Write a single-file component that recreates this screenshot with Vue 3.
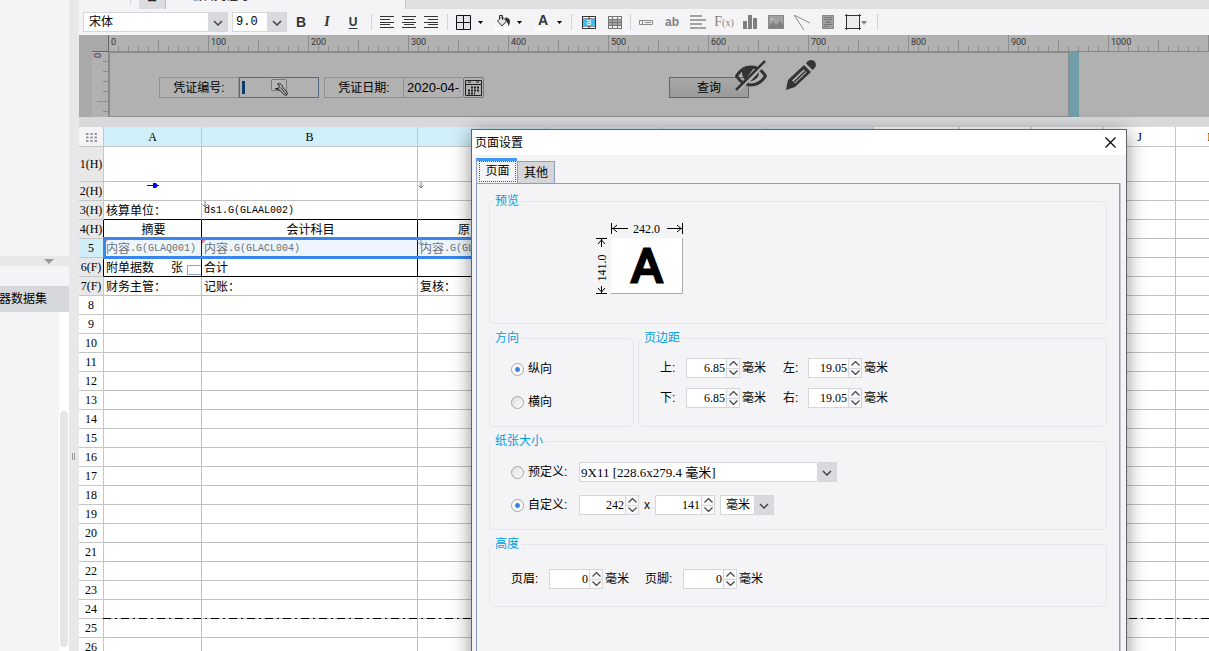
<script setup>
import { ref } from 'vue'

const fontName = ref('宋体')
const fontSize = ref('9.0')
const orientation = ref('portrait')
const paperMode = ref('custom')
const paper = ref('9X11 [228.6x279.4 毫米]')
const unit = ref('毫米')
const code = ref('')
const date = ref('2020-04-22')

const ticks = Array.from({ length: 112 }, (_, i) => ({
  x: i * 10 - 1,
  y: i % 10 === 0 ? 0 : i % 5 === 0 ? 5 : 11
}))
const rulerLabels = Array.from({ length: 11 }, (_, i) => i * 100)
const sideTicks = [9, 19, 29, 39, 49, 59]

const columns = [
  { name: 'A', width: 98 },
  { name: 'B', width: 216 },
  { name: 'C', width: 127 },
  { name: 'D', width: 119 },
  { name: 'E', width: 104 },
  { name: 'F', width: 105 },
  { name: 'G', width: 87 },
  { name: 'H', width: 72 },
  { name: 'I', width: 72 },
  { name: 'J', width: 72 },
  { name: 'K', width: 72 }
]

const content = {
  '3A': { text: '核算单位：' },
  '3B': { code: 'ds1.G(GLAAL002)', mark: 'down' },
  '2A': { mark: 'right' },
  '2C': { mark: 'down' },
  '4A': { text: '摘要', center: true },
  '4B': { text: '会计科目', center: true },
  '4C': { text: '原币金额', center: true },
  '5A': { text: '内容', code: '.G(GLAQ001)', mark: 'red' },
  '5B': { text: '内容', code: '.G(GLACL004)', mark: 'red' },
  '5C': { text: '内容', code: '.G(GLAQ002)', mark: 'down' },
  '6A': { text: '附单据数', extra: '张' },
  '6B': { text: '合计' },
  '7A': { text: '财务主管：' },
  '7B': { text: '记账：' },
  '7C': { text: '复核：' }
}
const suffix = { 1: '(H)', 2: '(H)', 3: '(H)', 4: '(H)', 6: '(F)', 7: '(F)' }
const rows = Array.from({ length: 26 }, (_, i) => {
  const n = i + 1
  return {
    n,
    label: n + (suffix[n] || ''),
    cells: columns.map((c, j) => ({
      key: n + c.name,
      boxed: j < 6 && n >= 4 && n <= 6,
      above: j < 6 && n === 3,
      ...(content[n + c.name] || {})
    }))
  }
})

const margins = ref([
  [{ label: '上:', value: '6.85' }, { label: '左:', value: '19.05' }],
  [{ label: '下:', value: '6.85' }, { label: '右:', value: '19.05' }]
])
const custom = ref(['242', '141'])
const heights = ref([{ label: '页眉:', value: '0' }, { label: '页脚:', value: '0' }])
</script>

<template>
  <div class="app">
    <aside class="side">
      <div class="side-top"></div>
      <div class="side-split"><svg width="10" height="6"><path d="M0 1h10L5 6z" fill="#999" /></svg></div>
      <div class="side-gap"></div>
      <div class="side-item"><span>服务器数据集</span></div>
      <div class="side-body"><div class="track"><div class="thumb"></div></div></div>
    </aside>
    <div class="splitter"><i></i><i></i></div>

    <main class="main">
      <div class="strip">
        <div class="strip-tabs">
          <span class="strip-sep"></span>
          <span class="strip-btn">⊞</span>
          <span class="strip-name"><b>HE</b> 编辑凭证号且</span>
        </div>
      </div>

      <div class="toolbar">
        <span class="sel font-sel">
          <select v-model="fontName" aria-label="字体"><option>宋体</option></select>
          <svg width="10" height="6"><path d="M1 1l4 4 4-4" /></svg>
        </span>
        <span class="sel size-sel">
          <select v-model="fontSize" aria-label="字号"><option>9.0</option></select>
          <svg width="10" height="6"><path d="M1 1l4 4 4-4" /></svg>
        </span>
        <button class="t26 bold">B</button>
        <button class="t26 ital">I</button>
        <button class="t26 under">U</button>
        <i class="sep"></i>
        <button class="t22" aria-label="左对齐"><svg width="14" height="12" class="ln"><path d="M0 .5h14M0 3.500h10M0 6.500h14M0 8.500h10M0 11.500h14" /></svg></button>
        <button class="t22" aria-label="居中"><svg width="14" height="12" class="ln"><path d="M0 .5h14M2 3.500h10M0 6.500h14M2 8.500h10M0 11.500h14" /></svg></button>
        <button class="t22" aria-label="右对齐"><svg width="14" height="12" class="ln"><path d="M0 .5h14M4 3.500h10M0 6.500h14M4 8.500h10M0 11.500h14" /></svg></button>
        <i class="sep"></i>
        <button class="t22" aria-label="边框"><svg width="15" height="15"><path d="M.5.5h14v14H.5zM7.500 0v15M0 7.500h15" fill="#e4e5e9" stroke="#111" /></svg></button>
        <button class="t12" aria-label="边框选项"><svg width="5" height="3"><path d="M0 0h5L2.500 3z" fill="#000" /></svg></button>
        <button class="t26 shifted" aria-label="背景色">
          <svg width="16" height="17">
            <rect y="13" width="16" height="4" fill="#fff" />
            <path d="M2.500 7L7 2.500l4.500 4.500L7 12z" fill="#e8e8ea" stroke="#333" />
            <path d="M4.500 5V1.500h3V6" fill="none" stroke="#333" />
            <path d="M10 3.500c3 0 5 1.500 5 4 0 1.500-.5 3-1.500 4.500-.8-3-1.500-4.500-3-6z" fill="#333" />
          </svg>
        </button>
        <button class="t14" aria-label="背景色选项"><svg width="5" height="3"><path d="M0 0h5L2.500 3z" fill="#000" /></svg></button>
        <button class="t26 shifted color" aria-label="字体颜色"><b>A</b><i></i></button>
        <button class="t14" aria-label="字体颜色选项"><svg width="5" height="3"><path d="M0 0h5L2.500 3z" fill="#000" /></svg></button>
        <i class="sep"></i>
        <button class="t26" aria-label="合并单元格">
          <svg width="14" height="13">
            <rect x=".5" y=".5" width="13" height="12" fill="#fff" stroke="#333" />
            <path d="M7 0v13M0 3h14M0 10h14" stroke="#333" />
            <rect x="1" y="3" width="12" height="7" fill="#3cbcf5" />
            <path d="M5 4.500h3.500v4H5.500v-2h3" fill="none" stroke="#d9f3ff" />
          </svg>
        </button>
        <button class="t26" aria-label="取消合并">
          <svg width="14" height="13">
            <rect x=".5" y=".5" width="13" height="12" fill="#a2a2a2" stroke="#777" />
            <path d="M1 2h12M1 11h12" stroke="#f0f0f0" stroke-width="2" />
            <path d="M0 3.500h14M0 6.500h14M0 9.500h14M4.500 0v13M9.500 0v13" stroke="#777" />
          </svg>
        </button>
        <i class="sep slim"></i>
        <button class="t26" aria-label="文本框"><svg width="14" height="5"><path d="M.5.5h13v4H.5zM3.500 1v3M6 2.500h6" fill="none" stroke="#888" /></svg></button>
        <button class="t26 ab">ab</button>
        <button class="t26" aria-label="富文本"><svg width="16" height="14"><path d="M0 1h12M0 5h16M0 9h12M0 13h16" stroke="#888" stroke-width="1.500" /></svg></button>
        <button class="t26 fx">F<small>(x)</small></button>
        <button class="t26" aria-label="图表"><svg width="14" height="14" fill="#808080"><rect y="6" width="4" height="8" /><rect x="5" width="4" height="14" /><rect x="10" y="3" width="4" height="11" /></svg></button>
        <button class="t26" aria-label="图片"><svg width="16" height="14"><rect x=".5" y=".5" width="15" height="13" fill="#a2a2a2" stroke="#888" /><path d="M1 11l4-4 3 3 4-4 3 4v3H1z" fill="#808080" /><circle cx="4" cy="4" r="1" fill="#ccc" /></svg></button>
        <button class="t26" aria-label="斜线"><svg width="16" height="15"><path d="M0 0l16 8M0 0l10 15" fill="none" stroke="#888" /></svg></button>
        <button class="t26" aria-label="子报表"><svg width="12" height="14"><rect x=".5" y=".5" width="11" height="13" fill="#a2a2a2" stroke="#888" /><path d="M2 2.500h8M2 4.500h8M2 9.500h8M2 11.500h5" stroke="#777" /><path d="M3 8l2-2 2 1 2-1v2z" fill="#777" /></svg></button>
        <button class="t34" aria-label="悬浮元素">
          <svg width="22" height="16"><rect x="1.500" y="1.500" width="13" height="13" fill="#ececee" stroke="#333" /><path d="M0 1.500h2M14 1.500h2M0 14.500h2M14 14.500h2M1.500 0v2M14.500 0v2M1.500 14v2M14.500 14v2" stroke="#333" /><path d="M16 7h6l-3 4z" fill="#888" /></svg>
        </button>
        <i class="sep slim"></i>
      </div>

      <section class="designer">
        <div class="corner"></div>
        <div class="corner-line"></div>
        <svg class="ruler-x">
          <rect v-for="t in ticks" :key="t.x" :x="t.x" :y="t.y" width="1" :height="16 - t.y" fill="#8c8c8c" />
          <text v-for="n in rulerLabels" :key="n" :x="n + 2" y="10">{{ n }}</text>
          <rect y="16" width="100%" height="1" fill="#888" />
        </svg>
        <svg class="ruler-y">
          <rect v-for="y in sideTicks" :key="y" :x="y === 49 ? 5 : 11" :y="y" :width="y === 49 ? 11 : 5" height="1" fill="#8c8c8c" />
          <text transform="translate(9 6) rotate(-90)">0</text>
          <rect x="16" width="1" height="65" fill="#888" />
        </svg>
        <div class="stage">
          <div class="canvas">
            <label class="field" for="code">凭证编号:</label>
            <span class="code-box">
              <input id="code" v-model="code" />
              <i class="cursor"></i>
              <svg width="17" height="17">
                <rect x=".5" y=".5" width="15" height="11" rx="1" fill="#b5b5b5" stroke="#777" />
                <path d="M4 9.500h3.500l1-3-2-1.500c2.500-1 5 .5 5 3l4.500 5v3h-2.500l-5-5z" fill="#b5b5b5" stroke="#222" />
                <path d="M9.500 8.500l5 6" stroke="#222" />
              </svg>
            </span>
            <label class="field second" for="date">凭证日期:</label>
            <span class="date-box"><input id="date" v-model="date" /></span>
            <button class="cal" aria-label="选择日期">
              <svg width="17" height="17"><path d="M.5 1.500h16v15H.5zM0 5.500h17" fill="none" stroke="#222" /><path d="M3 3h3M11 3h3" stroke="#222" /><path d="M6 8.500h9M3 11.500h12M3 14.500h7" stroke="#222" stroke-width="2" stroke-dasharray="2 1" /></svg>
            </button>
            <button class="query">查询</button>
            <svg class="eye" width="32" height="31" viewBox="0 0 32 31">
              <path d="M1.500 16Q7 7 16 7q9 0 14.500 9Q25 25 16 25 7 25 1.500 16z" fill="none" stroke="#333" stroke-width="3" />
              <path d="M7 8q5-3 13-1.500L10 20q-4-5-3-12z" fill="#333" />
              <path d="M24 12q0 8-9 9.500z" fill="#333" />
              <path d="M1.500 31.500L31.500 1.500" stroke="#b1b1b1" stroke-width="4" />
              <path d="M1 30L30 1" stroke="#333" stroke-width="2.500" />
            </svg>
            <svg class="pencil" width="30" height="31" viewBox="0 0 30 31">
              <path d="M0 30l2-10L18 5l7 7L9 27z" fill="#333" />
              <path d="M6 20.500L17.500 9.500l3 3L9 23.500z" fill="#b1b1b1" />
              <path d="M8 22L19 11.500" stroke="#333" stroke-width="1.500" />
              <path d="M20 3.500C22.500-1 27-.5 29 2c2 3 .5 5.500-2.500 8z" fill="#333" />
            </svg>
          </div>
          <div class="handle"></div>
        </div>
      </section>

      <div class="divider"></div>

      <section class="sheet">
        <table>
          <colgroup><col class="head-col" /><col v-for="c in columns" :key="c.name" :style="{ width: c.width + 'px' }" /></colgroup>
          <thead>
            <tr>
              <th class="all"><svg width="11" height="9"><path d="M0 1h11M0 4.500h11M0 8h11" stroke="#999" stroke-width="2" stroke-dasharray="2.500 1.750" /></svg></th>
              <th v-for="(c, i) in columns" :key="c.name" :class="{ on: i < 6 }">{{ c.name }}</th>
            </tr>
          </thead>
          <tbody>
            <tr v-for="r in rows" :key="r.n" :class="{ tall: r.n === 1, muted: r.n === 5 }">
              <th :class="{ band: r.n < 8, on: r.n === 5, edge: r.n >= 4 && r.n <= 6 }">{{ r.label }}</th>
              <td v-for="c in r.cells" :key="c.key" :class="{ boxed: c.boxed, above: c.above, center: c.center }">
                <div class="cell">
                  <span v-if="c.text">{{ c.text }}</span><span v-if="c.code" class="code">{{ c.code }}</span>
                  <template v-if="c.extra"><span class="extra">{{ c.extra }}</span><i class="mini"></i></template>
                  <svg v-if="c.mark === 'right'" class="m-right" width="12" height="7"><path d="M0 3.500h12" stroke="#00f" /><path d="M6 1h3l2 2.500L9 6H6z" fill="#00f" /></svg>
                  <svg v-if="c.mark === 'down'" class="m-down" width="6" height="7"><path d="M3 0v6M.5 3.500L3 6l2.500-2.500" fill="none" stroke="#777" /></svg>
                  <svg v-if="c.mark === 'red'" class="m-down" width="6" height="6"><path d="M0 0h5L0 5z" fill="#e8798a" /></svg>
                </div>
              </td>
            </tr>
          </tbody>
        </table>
        <div class="selection"></div>
        <div class="page-break"></div>
      </section>
    </main>

    <div class="dialog" role="dialog" aria-labelledby="dlg-title">
      <header class="title">
        <span id="dlg-title">页面设置</span>
        <button aria-label="关闭"><svg width="11" height="11"><path d="M.5.5l10 10M10.500.5l-10 10" stroke="#000" stroke-width="1.200" /></svg></button>
      </header>
      <div class="tabs">
        <button class="tab active"><span>页面</span></button>
        <button class="tab">其他</button>
      </div>
      <div class="panel">
        <fieldset class="preview">
          <legend>预览</legend>
          <svg width="90" height="76">
            <rect x="15" y="16" width="71" height="56" fill="#fff" />
            <path d="M15 71.500h71.500V16" fill="none" stroke="#aaa" />
            <g fill="none" stroke="#000">
              <path d="M15.500 1v11M86.500 1v11M16 6.500h16M86 6.500H71M21 3l-4 3.500 4 3.500M81 3l4 3.500-4 3.500" />
              <path d="M0 16.500h11M0 71.500h11M5.500 17v8M5.500 71v-7M2 22l3.500-4L9 22M2 66l3.500 4L9 66" />
            </g>
            <text x="50.500" y="11" text-anchor="middle" class="dim">242.0</text>
            <text transform="translate(10 46) rotate(-90)" text-anchor="middle" class="dim">141.0</text>
            <text x="51" y="60" text-anchor="middle" class="big">A</text>
          </svg>
        </fieldset>
        <div class="pair">
          <fieldset class="dir">
            <legend>方向</legend>
            <label class="radio"><input v-model="orientation" type="radio" value="portrait" />纵向</label>
            <label class="radio"><input v-model="orientation" type="radio" value="landscape" />横向</label>
          </fieldset>
          <fieldset class="margins">
            <legend>页边距</legend>
            <div v-for="(line, i) in margins" :key="i" class="line">
              <label v-for="m in line" :key="m.label" class="measure">
                <span class="short">{{ m.label }}</span>
                <span class="spin"><input v-model="m.value" /><span class="steps"><button aria-label="增加"><svg width="9" height="5"><path d="M.5 4.500l4-4 4 4" /></svg></button><button aria-label="减少"><svg width="9" height="5"><path d="M.5.5l4 4 4-4" /></svg></button></span></span>
                <span>毫米</span>
              </label>
            </div>
          </fieldset>
        </div>
        <fieldset class="paper">
          <legend>纸张大小</legend>
          <div class="line">
            <label class="radio"><input v-model="paperMode" type="radio" value="preset" />预定义:</label>
            <span class="sel paper-sel">
              <select v-model="paper" aria-label="纸张"><option>9X11 [228.6x279.4 毫米]</option></select>
              <svg width="10" height="6"><path d="M1 1l4 4 4-4" /></svg>
            </span>
          </div>
          <div class="line">
            <label class="radio"><input v-model="paperMode" type="radio" value="custom" />自定义:</label>
            <span class="spin wide"><input v-model="custom[0]" aria-label="宽度" /><span class="steps"><button aria-label="增加"><svg width="9" height="5"><path d="M.5 4.500l4-4 4 4" /></svg></button><button aria-label="减少"><svg width="9" height="5"><path d="M.5.5l4 4 4-4" /></svg></button></span></span>
            <span class="times">x</span>
            <span class="spin wide"><input v-model="custom[1]" aria-label="高度" /><span class="steps"><button aria-label="增加"><svg width="9" height="5"><path d="M.5 4.500l4-4 4 4" /></svg></button><button aria-label="减少"><svg width="9" height="5"><path d="M.5.5l4 4 4-4" /></svg></button></span></span>
            <span class="sel unit-sel">
              <select v-model="unit" aria-label="单位"><option>毫米</option></select>
              <svg width="10" height="6"><path d="M1 1l4 4 4-4" /></svg>
            </span>
          </div>
        </fieldset>
        <fieldset class="heights">
          <legend>高度</legend>
          <div class="line">
            <label v-for="h in heights" :key="h.label" class="measure">
              <span class="long">{{ h.label }}</span>
              <span class="spin"><input v-model="h.value" /><span class="steps"><button aria-label="增加"><svg width="9" height="5"><path d="M.5 4.500l4-4 4 4" /></svg></button><button aria-label="减少"><svg width="9" height="5"><path d="M.5.5l4 4 4-4" /></svg></button></span></span>
              <span>毫米</span>
            </label>
          </div>
        </fieldset>
      </div>
    </div>
  </div>
</template>

<style>
body { margin: 0; overflow: hidden; }
</style>

<style scoped>
* { box-sizing: border-box; }
.app {
  position: relative;
  display: flex;
  height: 100vh;
  overflow: hidden;
  background: #fff;
  color: #000;
  font: 12px/18px "Liberation Sans", "Noto Sans CJK SC", sans-serif;
}
button, input, select { margin: 0; padding: 0; border: 0; background: none; font: inherit; color: inherit; outline: none; border-radius: 0; }
button { display: flex; align-items: center; justify-content: center; }
select { appearance: none; }
i { font-style: normal; }
svg { display: block; flex: none; }

.side { flex: none; width: 69px; display: flex; flex-direction: column; background: #f4f4f7; }
.side-top { height: 256px; }
.side-split { height: 10px; background: #e8e8e8; display: flex; justify-content: flex-end; align-items: center; padding-right: 15px; }
.side-gap { height: 20px; }
.side-item { height: 26px; background: #d7d8dc; display: flex; justify-content: flex-end; align-items: center; padding-right: 22px; white-space: nowrap; overflow: hidden; }
.side-body { flex: 1; display: flex; justify-content: flex-end; }
.track { width: 10px; background: #fff; padding: 99px 1px 4px; }
.thumb { height: 100%; background: #e6e6e8; border-radius: 4px; }
.splitter { flex: none; width: 10px; background: #e8e8e8; display: flex; gap: 1px; padding: 453px 0 0 3px; }
.splitter i { width: 1px; height: 7px; background: #999; }

.main { flex: 1; min-width: 0; display: flex; flex-direction: column; overflow: hidden; }
.strip { height: 9px; flex: none; background: #e0e0e2; overflow: hidden; }
.strip-tabs { width: 327px; height: 9px; background: #f4f4f7; border-right: 1px solid #c8c8cc; display: flex; align-items: flex-end; padding-left: 51px; }
.strip-sep { width: 1px; height: 4px; background: #d5d5d9; margin-bottom: 5px; }
.strip-btn { width: 27px; height: 20px; margin: 0 4px 0 8px; background: #dcdde1; border-right: 1px solid #bbb; text-align: center; line-height: 16px; }
.strip-name { line-height: 18px; margin-bottom: 4px; white-space: nowrap; }
.strip-name b { color: #1f8fe0; }

.toolbar { flex: none; height: 26px; background: #f4f4f7; display: flex; align-items: center; padding-left: 4px; }
.toolbar button { flex: none; height: 22px; color: #333; }
.t34 { width: 34px; }
.t26 { width: 26px; }
.t22 { width: 22px; }
.t12 { width: 12px; }
.t14 { width: 14px; }
.toolbar .shifted { padding-left: 8px; }
.toolbar .t34 { justify-content: flex-start; padding-left: 4px; }
.sep { flex: none; width: 10px; height: 16px; background: linear-gradient(#d2d3d7, #d2d3d7) center / 1px 16px no-repeat; }
.slim { width: 5px; }
.bold, .under { font-weight: bold; }
.bold { font-size: 14px; }
.ital { font: italic bold 14px "Liberation Serif", serif; }
.under { text-decoration: underline; text-underline-offset: 2px; }
.ln { stroke: #333; }
.color { flex-direction: column; font-size: 14px; line-height: 14px; }
.color i { width: 16px; height: 4px; background: #fff; }
.toolbar .ab { color: #808080; font: bold 12px "Liberation Sans", sans-serif; }
.toolbar .fx { color: #808080; font: 14px "Liberation Serif", serif; }
.fx small { font-size: 10px; }

.sel { position: relative; display: flex; height: 20px; border: 1px solid #d5d6da; flex: none; background: linear-gradient(#d9dadd, #d9dadd) right / 19px 100% no-repeat #fff; }
.sel select { width: 100%; padding-left: 5px; font-size: 12px; }
.sel svg { position: absolute; right: 4px; top: 7px; pointer-events: none; fill: none; stroke: #444; stroke-width: 1.5; }
.font-sel { width: 145px; margin-right: 4px; }
.size-sel { width: 55px; margin-right: 1px; }
.size-sel select { padding-left: 3px; font-family: "Liberation Mono", monospace; }

.designer { flex: none; display: grid; grid-template-columns: 13px 17px 1fr; grid-template-rows: 17px 65px; background: #b1b1b1; }
.corner { grid-row: 1 / 3; background: #a9a9a9; }
.corner-line { border-bottom: 1px solid #666; border-right: 1px solid #666; background: #a9a9a9; }
.ruler-x { width: 100%; height: 17px; overflow: hidden; }
.ruler-y { width: 17px; height: 65px; }
.ruler-x text, .ruler-y text { font: 9px Roboto, sans-serif; fill: #333; }
.stage { display: flex; min-width: 0; }
.canvas { position: relative; flex: none; width: 960px; border: 1px solid #8c8c8c; display: flex; align-items: center; padding: 6px 0 0 49px; }
.handle { width: 10px; background: #709faa; }
.field { width: 80px; height: 21px; border: 1px solid #909090; text-align: center; line-height: 20px; flex: none; }
.second { margin-left: 5px; }
.code-box { position: relative; width: 80px; height: 21px; border: 1px solid #56688c; flex: none; }
.code-box input { width: 100%; height: 100%; }
.code-box svg { position: absolute; left: 31px; top: 1px; }
.cursor { position: absolute; left: 2px; top: 3px; width: 3px; height: 13px; background: #0b3a6b; }
.date-box { width: 59px; height: 21px; border: 1px solid #909090; border-width: 1px 0; padding-left: 3px; flex: none; overflow: hidden; display: flex; }
.date-box input { width: 53px; height: 19px; font-size: 13px; }
.cal { width: 21px; height: 21px; border: 1px solid #777; border-radius: 2px; flex: none; }
.query { width: 80px; height: 21px; margin-left: 185px; border: 1px solid #666; background: linear-gradient(#a8a8a8, #999); flex: none; }
.eye { position: absolute; left: 625px; top: 7px; }
.pencil { position: absolute; left: 676px; top: 7px; }
.divider { flex: none; height: 10px; background: #d9d9db; }

.sheet { position: relative; flex: 1; overflow: hidden; }
table { width: 1169px; table-layout: fixed; border-collapse: separate; border-spacing: 0; }
.head-col { width: 25px; }
th { height: 19px; padding: 0; font: 12px/18px "Liberation Serif", "Noto Sans CJK SC", serif; border: solid #c6c6c6; border-width: 0 1px 1px 0; white-space: nowrap; }
thead th { height: 20px; line-height: 17px; padding-top: 2px; }
.all { background: #f4f4f7; }
.all svg { margin: 0 auto; }
.band { background: #e8e8e8; }
th.on { background: #cfeffb; }
.edge { border-right-color: #000; }
td { height: 19px; padding: 0; border: solid #c0c0c0; border-width: 0 1px 1px 0; }
.tall th, .tall td { height: 35px; }
.above { border-bottom-color: #000; }
.boxed { border-color: #000; }
.cell { position: relative; height: 18px; display: flex; align-items: center; padding: 2px 0 0 2px; white-space: nowrap; }
.center .cell { justify-content: center; }
.code { font: 10px/18px "Liberation Mono", monospace; }
.muted td { color: #666; }
.extra { margin-left: 17px; }
.mini { position: absolute; right: 0; bottom: 1px; width: 14px; height: 10px; border: 1px solid #8ea3cc; border-right: 0; }
.m-right { margin: -14px 0 0 41px; }
.m-down { position: absolute; left: 0; top: 0; }
.selection { position: absolute; left: 24px; top: 110px; width: 770px; height: 22px; border: 3px solid #3a86ef; background: rgba(140, 190, 240, .15); }
.page-break { position: absolute; left: 24px; right: 0; top: 491px; height: 1px; background: repeating-linear-gradient(90deg, #000 0 8px, transparent 8px 12px, #000 12px 14px, transparent 14px 18px); }

.dialog { position: absolute; left: 471px; top: 129px; bottom: -20px; width: 656px; border: 1px solid #62666c; background: #f4f4f7; box-shadow: 0 4px 18px rgba(0, 0, 0, .45); display: flex; flex-direction: column; }
.title { height: 25px; flex: none; background: #fff; display: flex; justify-content: space-between; align-items: center; padding: 0 10px 0 3px; }
.tabs { display: flex; align-items: flex-end; height: 28px; flex: none; padding: 4px 4px 0; }
.tab { width: 38px; height: 22px; border: 1px solid #8a9ebf; border-bottom: 0; background: #d5d5da; }
.tab.active { width: 41px; height: 25px; border-top: 3px solid #3f97f5; border-right: 0; background: #f4f4f7; padding: 0 1px 1px 2px; }
.tab.active span { width: 100%; height: 100%; border: 1px dotted #4a4aa0; line-height: 18px; }
.panel { flex: 1; margin: 0 6px 0 4px; border: 1px solid #8a9ebf; border-bottom: 0; padding: 8px 12px 0; box-shadow: 1px 0 #c6c8cf; }
.panel fieldset { min-width: 0; margin: 0 0 5px; padding: 0; border: 1px solid #e5e6ea; border-radius: 5px; }
.panel legend { margin-left: 3px; padding: 1px 2px 0; line-height: 17px; color: #009fdc; }
.preview { height: 132px; }
.preview svg { margin: 12px 0 0 106px; }
.dim { font: 12px "Liberation Serif", serif; }
.big { font: 45px "DejaVu Sans", sans-serif; stroke: #000; stroke-width: 3px; }
.pair { display: flex; gap: 4px; }
.dir { width: 145px; height: 98px; }
.margins { flex: 1; }
.radio { display: flex; align-items: center; height: 20px; margin-left: 21px; }
.radio input { appearance: none; width: 13px; height: 13px; margin-right: 4px; border: 1px solid #a4a4a8; border-radius: 50%; background: linear-gradient(135deg, #ddd, #fff); }
.radio input:checked { background: radial-gradient(circle, #3a86ef 0 2px, #fff 3px); }
.dir .radio { margin-top: 13px; }
.dir legend + .radio { margin-top: 12px; }
.line { display: flex; align-items: center; height: 20px; }
.margins .line { margin: 11px 0 -1px 21px; gap: 17px; }
.measure { display: flex; align-items: center; }
.short { width: 26px; }
.long { width: 38px; }
.margins .measure + .measure .short { width: 25px; }
.spin { display: flex; width: 54px; height: 20px; margin-right: 2px; border: 1px solid #d5d6da; background: #fff; }
.spin input { flex: 1; min-width: 0; text-align: right; padding-right: 1px; font: 12px "Liberation Serif", serif; }
.steps { width: 13px; border-left: 1px solid #d5d6da; display: flex; flex-direction: column; gap: 1px; background: #d5d6da; }
.steps button { flex: 1; background: #f8f8fa; }
.steps svg { fill: none; stroke: #444; stroke-width: 1.2; }
.wide { width: 60px; margin: 0; }
.paper { height: 98px; }
.paper .line { margin-top: 13px; }
.paper legend + .line { margin-top: 12px; }
.paper .radio { width: 68px; }
.paper-sel { width: 258px; }
.paper-sel select { padding-left: 1px; font: 13px "Liberation Serif", "Noto Sans CJK SC", serif; }
.unit-sel { width: 54px; margin-left: 5px; }
.unit-sel select { padding-left: 5px; }
.times { width: 16px; text-align: center; }
.heights { height: 72px; }
.heights .line { margin: 16px 0 0 21px; gap: 16px; }
</style>
